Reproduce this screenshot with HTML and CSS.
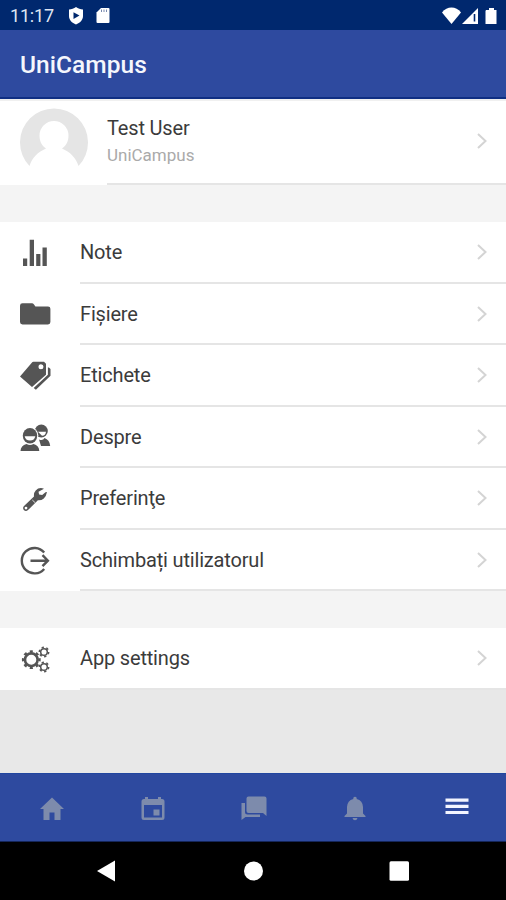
FILE: index.html
```html
<!DOCTYPE html>
<html lang="ro">
<head>
<meta charset="utf-8">
<title>UniCampus</title>
<link rel="stylesheet" href="styles.css">
</head>
<body>
<div class="screen">
  <div class="status">
    <span class="clock">11:17</span>
    <svg class="shield" width="16" height="18" viewBox="0 0 16 18"><path fill="#fff" d="M8 0C6 1.700 3.500 2.300 1 2.500V9c0 4 3 7 7 8.500 4-1.500 7-4.500 7-8.500V2.500C12.500 2.300 10 1.700 8 0Z"/><path fill="#00286e" d="M5.500 5.300v6.600l6-3.300z"/></svg>
    <svg class="card" width="14" height="17" viewBox="0 0 14 17"><path fill="#fff" d="M5 1h7.500a1 1 0 0 1 1 1v13a1 1 0 0 1-1 1h-11a1 1 0 0 1-1-1V5.500z"/><path stroke="#7687ad" stroke-width="1" d="M5.500 2.500v2.500M8 2.500v2.500M10.500 2.500v2.500"/></svg>
    <svg class="signals" width="58" height="20" viewBox="0 0 58 20"><g fill="#fff"><path d="M0 6.500C5-.2 14-.2 19 6.500L9.500 18z"/><path d="M20 18 36 2v16z"/><path d="M44 4h3V2h5v2h2.500v14h-11V5z"/></g><path d="M32.500 8v7.500" stroke="#00286e" stroke-width="1.600"/></svg>
  </div>
  <header class="header"><h1>UniCampus</h1></header>
  <main class="content">
    <a class="row user">
      <svg class="avatar" width="68" height="62" viewBox="0 0 68 62"><path fill="#e5e5e5" d="M9.500 58a34 34 0 1 1 49 0C56 49.500 50 44 42 40.500 46.500 37.500 48.500 33 48.500 27.500a14.500 14.500 0 0 0-29 0C19.500 33 21.500 37.500 26 40.500 18 44 12 49.500 9.500 58Z"/></svg>
      <div class="label"><div class="names"><span class="name">Test User</span><span class="site">UniCampus</span></div><svg class="chevron" viewBox="0 0 12 18"><path d="m2 2 7.500 7L2 16"/></svg></div>
    </a>
    <div class="gap"></div>
    <a class="row">
      <svg class="icon" viewBox="0 0 32 32"><path d="M4 21.500h4.200V29H4zM10.700 2.700h4.300V29h-4.300zM17.200 17h4.200v12h-4.200zM23.500 10.500h4.300V29h-4.300z"/></svg>
      <div class="label"><span>Note</span><svg class="chevron" viewBox="0 0 12 18"><path d="m2 2 7.500 7L2 16"/></svg></div>
    </a>
    <a class="row">
      <svg class="icon" viewBox="0 0 32 32"><path d="M3.500 5.300H13q1 0 2 1.200l1.400 1.900H29q2.400 0 2.400 2.400v13.300q0 2.400-2.400 2.400H3.500Q1 26.500 1 24.100V7.700Q1 5.300 3.500 5.300Z"/></svg>
      <div class="label"><span>Fişiere</span><svg class="chevron" viewBox="0 0 12 18"><path d="m2 2 7.500 7L2 16"/></svg></div>
    </a>
    <a class="row">
      <svg class="icon" viewBox="0 0 32 32"><path fill-rule="evenodd" d="M1 16.500 13 2.500q.5-.6 1.400-.7H25l2 2v11L13 27.100zM22 4.300a2.500 2.500 0 1 0 0 5 2.500 2.500 0 0 0 0-5Z"/><path d="M28.900 7.500h1l1.600 1.600v6.700L16.900 29.700l-2.200-1.600 14.200-13.400z"/></svg>
      <div class="label"><span>Etichete</span><svg class="chevron" viewBox="0 0 12 18"><path d="m2 2 7.500 7L2 16"/></svg></div>
    </a>
    <a class="row">
      <svg class="icon low" viewBox="0 0 32 32"><circle cx="22.300" cy="9" r="6.500"/><path d="M19 9.800h8q-.5 4-4 4z" fill="#fff"/><path d="M20 17.500q4 1.500 5.500-1.500 5 1.700 5.700 7.900H22z"/><circle cx="11" cy="13.300" r="8.300" fill="#fff"/><ellipse cx="11" cy="13.800" rx="7.200" ry="7.800"/><path d="M5.700 14.300h10.600q-.7 4.200-5.300 4.200t-5.300-4.200Z" fill="#fff"/><path d="M1.500 28.900q.3-5.300 6-6.900 3.500 2 7 0 5.600 1.600 5.800 6.900z"/></svg>
      <div class="label"><span>Despre</span><svg class="chevron" viewBox="0 0 12 18"><path d="m2 2 7.500 7L2 16"/></svg></div>
    </a>
    <a class="row">
      <svg class="icon low" viewBox="0 0 32 32"><path fill-rule="evenodd" d="M25 5.700q-5-1.800-8.300 1.800-2.200 2.400-1.700 6L5 23q-1.700 1.800-.2 3.900 2 2 4.200.2l9.900-9.900q3.500.3 5.900-1.800 2.500-2.100 3.200-6.300l-1.500.1-3.300 2.700-3.100-.5-.6-2.700zM7 23.700a1.400 1.400 0 1 0 0 2.800 1.400 1.400 0 0 0 0-2.800Z"/><path d="m13.300 17 3 2.800" stroke="#fff" stroke-width=".8"/></svg>
      <div class="label"><span>Preferinţe</span><svg class="chevron" viewBox="0 0 12 18"><path d="m2 2 7.500 7L2 16"/></svg></div>
    </a>
    <a class="row">
      <svg class="icon line low" viewBox="0 0 32 32"><path d="M25.200 7.500a12.700 12.700 0 1 0 0 16.400M11.500 15.700h17M23.500 10.200l5.400 5.500-5.400 5.500"/></svg>
      <div class="label"><span>Schimbați utilizatorul</span><svg class="chevron" viewBox="0 0 12 18"><path d="m2 2 7.500 7L2 16"/></svg></div>
    </a>
    <div class="gap"></div>
    <a class="row">
      <svg class="icon gears" viewBox="0 0 32 32"><circle cx="12.300" cy="16.700" r="6.300" stroke-width="2.600"/><circle cx="12.300" cy="16.700" r="8.200" stroke-width="2.400" pathLength="100" stroke-dasharray="6 6.500" stroke-dashoffset="3"/><circle cx="25" cy="9" r="3.300" stroke-width="1.500"/><circle cx="25" cy="9" r="4.700" stroke-width="1.500" pathLength="100" stroke-dasharray="8 8.660"/><circle cx="25" cy="24" r="3.300" stroke-width="1.500"/><circle cx="25" cy="24" r="4.700" stroke-width="1.500" pathLength="100" stroke-dasharray="8 8.660"/></svg>
      <div class="label"><span>App settings</span><svg class="chevron" viewBox="0 0 12 18"><path d="m2 2 7.500 7L2 16"/></svg></div>
    </a>
  </main>
  <nav class="tabs">
    <svg viewBox="0 0 28 28"><path d="M14 3.500 26 15h-3.500v11h-6v-7.500h-5V26h-6V15H2z"/></svg>
    <svg viewBox="0 0 28 28"><path fill-rule="evenodd" d="M6 3h3v2h10V3h3v2h1q2.500 0 2.500 2.500v16Q25.500 26 23 26H5q-2.500 0-2.500-2.500v-16Q2.500 5 5 5h1zM5 11v12.500h18V11zm9.500 4.500h6v6h-6z"/></svg>
    <svg viewBox="0 0 28 28"><path d="M8.500 2.500h16q2 0 2 2V22l-3.500-3H8.500q-2 0-2-2V4.500q0-2 2-2ZM1.500 9H5v9q0 2.500 2.500 2.500H20V23H5.500l-4 3z"/></svg>
    <svg viewBox="0 0 28 28"><path d="M12.300 5V3.700q1.700-2 3.400 0V5q6 1.500 6.300 8v6.500l2.500 2.500v1h-21v-1L6 19.500V13q.3-6.500 6.300-8ZM11.500 24h5q-.5 2.300-2.500 2.300T11.500 24Z"/></svg>
    <svg class="active" viewBox="0 0 28 28"><path d="M2.500 4.500h23v3.200h-23zM2.500 10.700h23v3.200h-23zM2.500 16.900h23v3.200h-23z"/></svg>
  </nav>
  <div class="system">
    <svg viewBox="0 0 24 24"><path d="M2 12 20 1.500v21z"/></svg>
    <svg viewBox="0 0 24 24"><circle cx="12.500" cy="12" r="9.500"/></svg>
    <svg viewBox="0 0 24 24"><rect x="2.500" y="2.200" width="19.500" height="19.500" rx="1.500"/></svg>
  </div>
</div>
</body>
</html>
```
FILE: styles.css
```css
* { box-sizing: border-box; }
body { margin: 0; font-family: Roboto, sans-serif; color: #3b3b3b; }
.screen { width: 506px; height: 900px; display: flex; flex-direction: column; background: #e8e8e8; overflow: hidden; }
svg { display: block; flex: none; }
.status { height: 30px; flex: none; display: flex; align-items: center; padding: 1px 6px 0 10px; background: #00286e; color: #fff; }
.clock { width: 58px; font-size: 18px; line-height: 30px; letter-spacing: -.2px; color: #dfe5f3; }
.card { margin-left: 12px; }
.signals { margin-left: auto; }
.header { height: 69px; flex: none; display: flex; align-items: center; padding: 0 20px; background: #2e4a9f; border-bottom: 2px solid #102f83; }
h1 { margin: 1px 0 0; font-size: 24.500px; font-weight: 500; letter-spacing: .05px; color: #f5f7fc; }
.content { height: 674px; flex: none; border-top: 2px solid #f0f0f0; }
.row { height: 61.500px; display: flex; align-items: center; padding-left: 19px; background: #fff; }
.icon { width: 32px; height: 32px; margin-right: 29px; fill: #555; }
.low { margin-top: 1px; }
.line { fill: none; stroke: #555; stroke-width: 2.400; }
.gears { fill: none; stroke: #555; }
.label { flex: 1; align-self: stretch; display: flex; align-items: center; justify-content: space-between; padding: 1px 18px 0 0; border-bottom: 2px solid #e5e5e5; font-size: 20px; letter-spacing: -.17px; white-space: nowrap; }
.chevron { width: 12px; height: 18px; fill: none; stroke: #d4d4d4; stroke-width: 2; }
.user { height: 84px; }
.user .label { padding-bottom: 3px; }
.avatar { margin: 0 19px 9px 1px; }
.names { display: flex; flex-direction: column; padding-bottom: 1px; }
.name { font-size: 20px; line-height: 28px; }
.site { font-size: 17px; line-height: 26px; letter-spacing: 0; color: #aaa; }
.gap { height: 37px; background: #f4f4f4; }
.tabs { height: 69px; flex: none; display: flex; justify-content: space-around; align-items: center; padding-left: 1px; background: #2e4a9f; border-top: 1px solid #2146a0; border-bottom: 1px solid #15265a; }
.tabs svg { width: 28px; height: 28px; fill: #7d8bac; }
.tabs .active { fill: #f3f5ff; margin: 0 -1px 0 1px; }
.system { flex: 1; display: flex; justify-content: center; align-items: center; gap: 122px; background: #000; }
.system svg { width: 24px; height: 24px; fill: #fff; }
```
